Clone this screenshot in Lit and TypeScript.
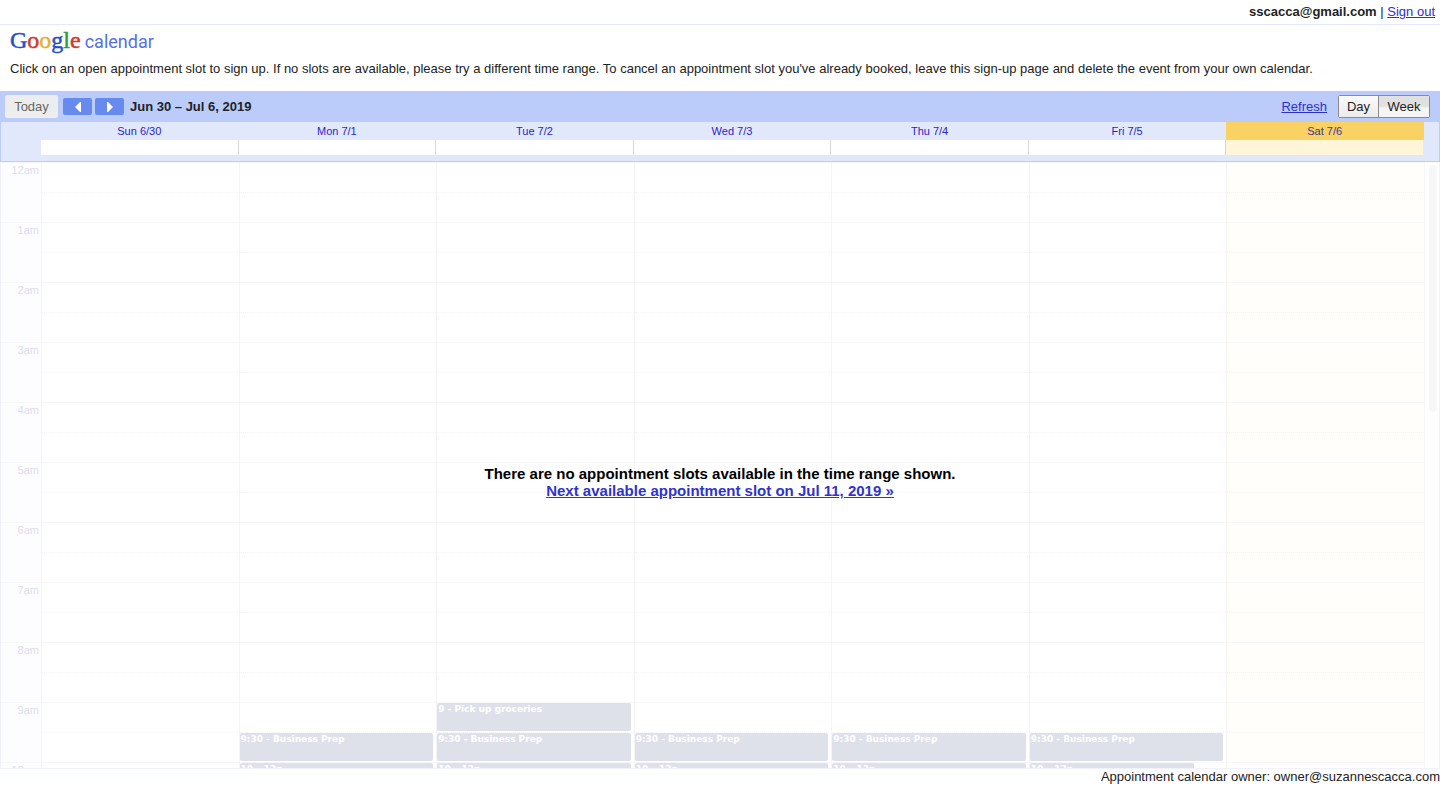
import { LitElement, html, css } from "lit";
import { customElement, property } from "lit/decorators.js";
import { classMap } from "lit/directives/class-map.js";
import { styleMap } from "lit/directives/style-map.js";

interface CalEvent {
  title: string;
  slot: number;
  span: number;
  narrow?: boolean;
}

interface Day {
  label: string;
  today?: boolean;
  events: CalEvent[];
}

const prep: CalEvent = { title: "9:30 - Business Prep", slot: 19, span: 1 };
const morning: CalEvent = { title: "10 – 12p", slot: 20, span: 4 };

const DAYS: Day[] = [
  { label: "Sun 6/30", events: [] },
  { label: "Mon 7/1", events: [prep, morning] },
  {
    label: "Tue 7/2",
    events: [{ title: "9 - Pick up groceries", slot: 18, span: 1 }, prep, morning],
  },
  { label: "Wed 7/3", events: [prep, morning] },
  { label: "Thu 7/4", events: [prep, morning] },
  { label: "Fri 7/5", events: [prep, { ...morning, narrow: true }] },
  { label: "Sat 7/6", today: true, events: [] },
];

const HOURS = Array.from({ length: 24 }, (_, h) => `${h % 12 || 12}${h < 12 ? "am" : "pm"}`);
const SLOTS = Array.from({ length: 48 }, (_, i) => i);

@customElement("cal-toolbar")
export class CalToolbar extends LitElement {
  static styles = css`
    :host {
      display: flex;
      align-items: center;
      height: 31px;
      padding: 0 10px 0 5px;
      background: #bbccfb;
      box-sizing: border-box;
      flex: none;
    }
    button {
      font: 13px/21px "Liberation Sans", Arial, sans-serif;
      color: #222;
      margin: 0;
      padding: 0;
      border: 0;
    }
    .today {
      width: 53px;
      height: 23px;
      border-radius: 2px;
      background: #ededee;
      color: #666;
      margin-right: 5px;
    }
    .nav {
      display: flex;
      align-items: center;
      justify-content: center;
      width: 29px;
      height: 17px;
      margin-right: 3px;
      border-radius: 2px;
      background: #668aee;
    }
    .range {
      font-size: 13px;
      font-weight: bold;
      margin: 0 auto 0 3px;
    }
    a {
      color: #2f2fcf;
      margin-right: 11px;
    }
    .views {
      display: flex;
      border: 1px solid #8b8b8b;
      border-radius: 2px;
      background: #f5f5f5;
    }
    .day {
      width: 39px;
      height: 21px;
      background: linear-gradient(#fafafa, #ececec);
    }
    .week {
      width: 51px;
      height: 21px;
      border-left: 1px solid #8b8b8b;
      background: linear-gradient(#e0e0e0 0 45%, #f5f5f5 60%);
    }
  `;

  render() {
    return html`
      <button class="today" disabled>Today</button>
      <button class="nav" aria-label="Previous week">
        <svg width="6" height="10" viewBox="0 0 6 10"><path d="M6 0V10H5L0 5L5 0Z" fill="#fff" /></svg>
      </button>
      <button class="nav" aria-label="Next week">
        <svg width="6" height="10" viewBox="0 0 6 10"><path d="M0 0V10H1L6 5L1 0Z" fill="#fff" /></svg>
      </button>
      <h2 class="range">Jun 30 – Jul 6, 2019</h2>
      <a href="#refresh">Refresh</a>
      <div class="views">
        <button class="day">Day</button>
        <button class="week" aria-pressed="true">Week</button>
      </div>
    `;
  }
}

@customElement("cal-week-header")
export class CalWeekHeader extends LitElement {
  @property({ attribute: false }) days: Day[] = [];

  static styles = css`
    :host {
      display: block;
      flex: none;
      background: #e2e8fc;
      border: 1px solid #bbccfb;
      border-top: 0;
      padding: 0 15px 6px 39px;
    }
    .labels,
    .allday {
      display: grid;
      grid-template-columns: repeat(7, minmax(0, 1fr));
    }
    .labels {
      margin-left: 1px;
    }
    .allday {
      margin-right: 1px;
    }
    .label {
      height: 18px;
      padding-right: 1px;
      font-size: 11px;
      line-height: 18px;
      text-align: center;
      color: #2b23cc;
    }
    .label.today {
      background: #fad163;
      color: #4433a0;
    }
    .cell {
      height: 15px;
      border-left: 1px solid #d6d6d6;
      background: #fff;
    }
    .cell:first-child {
      border-left-color: #e2e8fc;
    }
    .cell.today {
      background: #fff5d8;
      border-left-color: #fad163;
    }
  `;

  render() {
    return html`
      <div class="labels">
        ${this.days.map(
          (d) => html`<div class=${classMap({ label: true, today: !!d.today })}>${d.label}</div>`
        )}
      </div>
      <div class="allday">
        ${this.days.map((d) => html`<div class=${classMap({ cell: true, today: !!d.today })}></div>`)}
      </div>
    `;
  }
}

@customElement("cal-week-grid")
export class CalWeekGrid extends LitElement {
  @property({ attribute: false }) days: Day[] = [];

  static styles = css`
    :host {
      display: flex;
      position: relative;
      flex: 1;
      min-height: 0;
      box-sizing: border-box;
      border: 1px solid #f0f1fe;
      border-top: 0;
    }
    .scroll {
      flex: 1;
      display: flex;
      align-items: flex-start;
      overflow-y: auto;
      scrollbar-width: none;
    }
    .hours {
      flex: none;
      width: 40px;
      background: #fdfdff;
    }
    .hour {
      box-sizing: border-box;
      height: 60px;
      padding-right: 2px;
      border-top: 1px solid #f8f8fb;
      font-size: 11px;
      line-height: 14px;
      text-align: right;
      color: #dedeee;
    }
    .days {
      flex: 1;
      display: grid;
      grid-template-columns: repeat(7, minmax(0, 1fr));
      border-right: 1px solid #f8f8fa;
    }
    .column {
      display: grid;
      grid-template-columns: minmax(0, 1fr);
      grid-template-rows: repeat(48, 30px);
      border-left: 1px solid #f5f5f7;
    }
    .column.today {
      background: #fffefa;
    }
    .slot {
      grid-column: 1;
      border-top: 1px solid #f7f7f9;
    }
    .slot.half {
      border-top: 1px dotted #f4f4f6;
    }
    .event {
      grid-column: 1;
      position: relative;
      margin: 1px 3px 1px 0;
      padding-left: 1px;
      overflow: hidden;
      border-radius: 2px;
      background: #dfe1ea;
      font: bold 9px/13px "DejaVu Sans", Verdana, sans-serif;
      color: #fff;
      white-space: nowrap;
    }
    .event.narrow {
      margin-right: 32px;
    }
    .track {
      flex: none;
      width: 14px;
      box-sizing: border-box;
      display: flex;
      justify-content: flex-end;
      padding: 3px 2px 0 0;
    }
    .thumb {
      width: 8px;
      height: 41%;
      border-radius: 4px;
      background: #f7f7f7;
    }
    .notice {
      position: absolute;
      top: 50%;
      left: 0;
      right: 0;
      text-align: center;
      font-size: 15px;
      line-height: 17px;
      font-weight: bold;
      color: #000;
    }
    .notice p {
      margin: 0;
    }
    a {
      color: #2f33cc;
    }
  `;

  private column(day: Day) {
    return html`
      <div class=${classMap({ column: true, today: !!day.today })}>
        ${SLOTS.map(
          (i) => html`<div
            class=${classMap({ slot: true, half: i % 2 === 1 })}
            style=${styleMap({ gridRow: `${i + 1}` })}
          ></div>`
        )}
        ${day.events.map(
          (e) => html`<div
            class=${classMap({ event: true, narrow: !!e.narrow })}
            style=${styleMap({ gridRow: `${e.slot + 1} / span ${e.span}` })}
          >${e.title}</div>`
        )}
      </div>
    `;
  }

  render() {
    return html`
      <div class="scroll">
        <div class="hours">${HOURS.map((h) => html`<div class="hour">${h}</div>`)}</div>
        <div class="days">${this.days.map((d) => this.column(d))}</div>
      </div>
      <div class="track"><div class="thumb"></div></div>
      <div class="notice">
        <p>There are no appointment slots available in the time range shown.</p>
        <p><a href="#next">Next available appointment slot on Jul 11, 2019 »</a></p>
      </div>
    `;
  }
}

@customElement("app-root")
export class AppRoot extends LitElement {
  static styles = css`
    :host {
      display: flex;
      flex-direction: column;
      height: 100vh;
      overflow: hidden;
      background: #fff;
      color: #222;
      font: 13px/15px "Liberation Sans", Arial, sans-serif;
    }
    .account {
      flex: none;
      padding: 4px 5px 5px;
      border-bottom: 1px solid #e2e9fc;
      text-align: right;
    }
    a {
      color: #2f2fcf;
    }
    .intro {
      flex: none;
      padding: 0 10px 15px;
    }
    .brand {
      display: flex;
      align-items: baseline;
      gap: 4px;
      height: 36px;
      margin: 0;
      font-weight: normal;
      line-height: 30px;
    }
    .google {
      font-family: "Liberation Serif", "Times New Roman", serif;
      font-size: 24px;
      -webkit-text-stroke: 0.5px currentColor;
    }
    .blue {
      color: #2a4fc4;
    }
    .red {
      color: #d03a2c;
    }
    .yellow {
      color: #e5b32c;
    }
    .green {
      color: #2c9a3c;
    }
    .product {
      font-family: Roboto, sans-serif;
      font-size: 18px;
      color: #5570e0;
    }
    .help {
      margin: 0;
    }
    .owner {
      flex: none;
      padding-bottom: 5px;
      text-align: right;
    }
  `;

  render() {
    return html`
      <div class="account"><b>sscacca@gmail.com</b> | <a href="#signout">Sign out</a></div>
      <header class="intro">
        <h1 class="brand">
          <span class="google"
            ><span class="blue">G</span><span class="red">o</span><span class="yellow">o</span
            ><span class="blue">g</span><span class="green">l</span><span class="red">e</span></span
          >
          <span class="product">calendar</span>
        </h1>
        <p class="help">
          Click on an open appointment slot to sign up. If no slots are available, please try a
          different time range. To cancel an appointment slot you've already booked, leave this
          sign-up page and delete the event from your own calendar.
        </p>
      </header>
      <cal-toolbar></cal-toolbar>
      <cal-week-header .days=${DAYS}></cal-week-header>
      <cal-week-grid .days=${DAYS}></cal-week-grid>
      <footer class="owner">Appointment calendar owner: owner@suzannescacca.com</footer>
    `;
  }
}
